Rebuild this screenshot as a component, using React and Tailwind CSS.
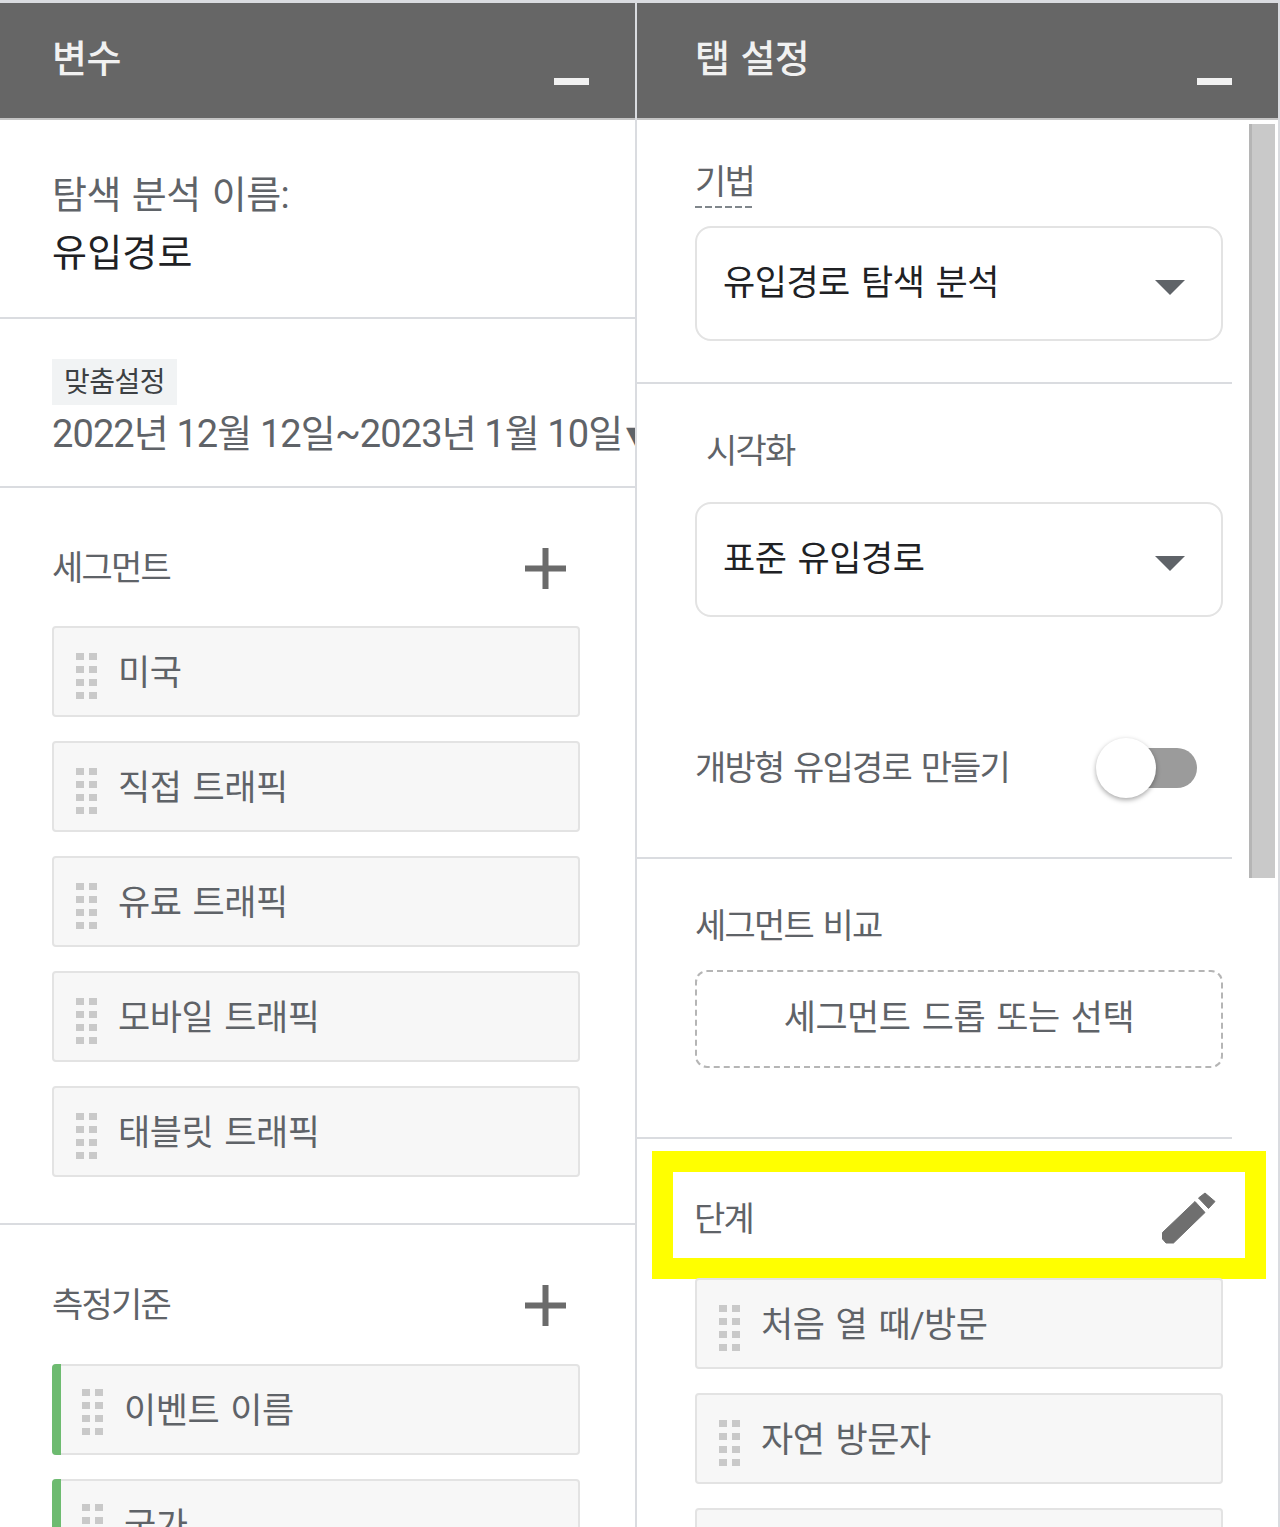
import React from "react";

const font = "font-['Roboto','Noto_Sans_CJK_KR',sans-serif]";
const labelText = "text-[34px] leading-[48px] tracking-[-1.8px] [word-spacing:3px] text-[#5f6368]";

const Grip = () => (
  <div className="grid grid-cols-2 gap-x-[5px] gap-y-[6px] w-[21px] shrink-0">
    {[0, 1, 2, 3, 4, 5, 6, 7].map((i) => (
      <span key={i} className="block h-[7px] w-[8px] bg-[#c9c9c9]" />
    ))}
  </div>
);

const Item = ({ text, green }) => (
  <div className="relative flex h-[91px] w-[528px] shrink-0 items-center rounded-[4px] border-2 border-[#e3e3e3] bg-[#f7f7f7]">
    {green && <div className="absolute inset-y-[-2px] left-[-2px] w-[9px] rounded-l-[4px] bg-[#6dbb70]" />}
    <div className={green ? "ml-[28px] mt-[5px]" : "ml-[22px] mt-[9px]"}>
      <Grip />
    </div>
    <span className="ml-[21px] mt-[5px] text-[35px] tracking-[-0.5px] [word-spacing:3px] text-[#5f6368]">{text}</span>
  </div>
);

const Header = ({ title, left }) => (
  <div className={`${left} flex h-[117px] shrink-0 items-start justify-between border-b-2 border-[#c4c4c4] bg-[#666666] pr-[46px]`}>
    <span className="mt-[31px] text-[38px] leading-[50px] font-medium tracking-[-0.5px] [word-spacing:2px] text-[#f1f1f1]">{title}</span>
    <span className="mt-[75px] block h-[7px] w-[35px] bg-[#f1f1f1]" />
  </div>
);

const Plus = () => (
  <svg width="41" height="41" viewBox="0 0 41 41" className="shrink-0">
    <path d="M17.5 0h6v17.5H41v6H23.5V41h-6V23.5H0v-6h17.5z" fill="#6b6b6b" />
  </svg>
);

const Caret = () => (
  <svg width="30" height="16" viewBox="0 0 30 16" className="shrink-0">
    <path d="M0 0h30L15 15z" fill="#5f6368" />
  </svg>
);

const Pencil = () => (
  <svg width="54" height="54" viewBox="0 0 54 54" className="shrink-0">
    <path
      d="M33 9.5 43 20.5 11.5 51H4L.5 47V40.5zM43 1 53 9.5 46.5 16.5 36.5 6z"
      fill="#6f6f6f"
      stroke="#6f6f6f"
      strokeWidth="1"
      strokeLinejoin="round"
    />
  </svg>
);

const Select = ({ text }) => (
  <div className="flex h-[115px] w-[528px] items-center justify-between rounded-[16px] border-2 border-[#e3e3e3] pl-[26px] pr-[36px]">
    <span className="mt-[2px] text-[35px] tracking-[-0.5px] [word-spacing:3px] text-[#202124]">{text}</span>
    <span className="mt-2">
      <Caret />
    </span>
  </div>
);

const Divider = () => <div className="h-[2px] shrink-0 bg-[#dadce0]" />;

export default function App() {
  return (
    <div className={`${font} flex h-[1527px] w-[1280px] flex-col overflow-hidden bg-white`}>
      <div className="h-[3px] shrink-0 bg-[#dadce0]" />
      <div className="flex min-h-0 flex-1">
        {/* left panel */}
        <div className="flex w-[635px] shrink-0 flex-col">
          <Header title="변수" left="pl-[52px]" />

          <div className="flex h-[197px] shrink-0 flex-col pl-[52px] pt-[46px]">
            <span className="text-[38px] leading-[58px] tracking-[-0.5px] [word-spacing:2px] text-[#5f6368]">탐색 분석 이름:</span>
            <span className="text-[38px] leading-[58px] tracking-[0.2px] text-[#202124]">유입경로</span>
          </div>
          <Divider />

          <div className="flex h-[167px] shrink-0 flex-col items-start overflow-hidden pl-[52px] pt-[40px]">
            <span className="flex h-[46px] w-[125px] items-center justify-center bg-[#f1f3f4] pt-[2px] text-[28px] tracking-[-0.5px] text-[#3c4043]">맞춤설정</span>
            <span className="whitespace-nowrap text-[38px] leading-[58px] tracking-[-0.9px] text-[#5f6368]">
              2022년 12월 12일~2023년 1월 10일<span className="ml-[4px]">▾</span>
            </span>
          </div>
          <Divider />

          <div className="flex h-[735px] shrink-0 flex-col pl-[52px]">
            <div className="mt-[56px] flex w-[514px] items-center justify-between">
              <span className={labelText}>세그먼트</span>
              <Plus />
            </div>
            <div className="mt-[34px] flex flex-col gap-[24px]">
              {["미국", "직접 트래픽", "유료 트래픽", "모바일 트래픽", "태블릿 트래픽"].map((t) => (
                <Item key={t} text={t} />
              ))}
            </div>
          </div>
          <Divider />

          <div className="flex flex-col pl-[52px]">
            <div className="mt-[56px] flex w-[514px] items-center justify-between">
              <span className={labelText}>측정기준</span>
              <Plus />
            </div>
            <div className="mt-[35px] flex flex-col gap-[24px]">
              <Item text="이벤트 이름" green />
              <Item text="국가" green />
            </div>
          </div>
        </div>

        <div className="w-[2px] shrink-0 bg-[#dadce0]" />

        {/* right panel */}
        <div className="relative flex w-[641px] shrink-0 flex-col">
          <Header title="탭 설정" left="pl-[58px]" />
          <div className="absolute right-[3px] top-[121px] h-[754px] w-[26px] border-l-[3px] border-[#b5b5b5] bg-[#c9c9c9]" />

          <div className="flex h-[262px] w-[595px] shrink-0 flex-col items-start pl-[58px] pt-[38px]">
            <div className="flex flex-col">
              <span className={labelText}>기법</span>
              <span className="h-[2px] bg-[repeating-linear-gradient(90deg,#80868b_0,#80868b_7px,transparent_7px,transparent_10px)]" />
            </div>
            <div className="mt-[18px]">
              <Select text="유입경로 탐색 분석" />
            </div>
          </div>
          <div className="w-[595px]"><Divider /></div>

          <div className="flex h-[473px] w-[595px] shrink-0 flex-col pl-[58px]">
            <span className={`${labelText} ml-[11px] mt-[43px]`}>시각화</span>
            <div className="mt-[27px]">
              <Select text="표준 유입경로" />
            </div>
            <div className="mt-[127px] flex w-[502px] items-center justify-between">
              <span className={labelText}>개방형 유입경로 만들기</span>
              <div className="relative h-[40px] w-[101px]">
                <div className="absolute right-0 top-0 h-[40px] w-[78px] rounded-full bg-[#9b9b9b]" />
                <div className="absolute left-0 top-[-10px] h-[60px] w-[60px] rounded-full bg-white shadow-[0_2px_5px_rgba(0,0,0,0.35)]" />
              </div>
            </div>
          </div>
          <div className="w-[595px]"><Divider /></div>

          <div className="flex h-[278px] w-[595px] shrink-0 flex-col pl-[58px]">
            <span className={`${labelText} mt-[43px]`}>세그먼트 비교</span>
            <div className="mt-[20px] flex h-[98px] w-[528px] items-center justify-center rounded-[12px] border-2 border-dashed border-[#b5b5b5] text-[35px] tracking-[-0.5px] [word-spacing:3px] text-[#5f6368]">
              세그먼트 드롭 또는 선택
            </div>
          </div>
          <div className="w-[595px]"><Divider /></div>

          <div className="ml-[15px] mt-[12px] flex h-[128px] w-[614px] shrink-0 items-center justify-between border-[21px] border-[#ffff00] pl-[21px] pr-[29px] pt-[8px]">
            <span className={labelText}>단계</span>
            <Pencil />
          </div>

          <div className="ml-[58px] -mt-[1px] flex flex-col gap-[24px]">
            <Item text="처음 열 때/방문" />
            <Item text="자연 방문자" />
            <Item text="" />
          </div>
        </div>
        <div className="w-[2px] shrink-0 bg-[#dadce0]" />
      </div>
    </div>
  );
}
